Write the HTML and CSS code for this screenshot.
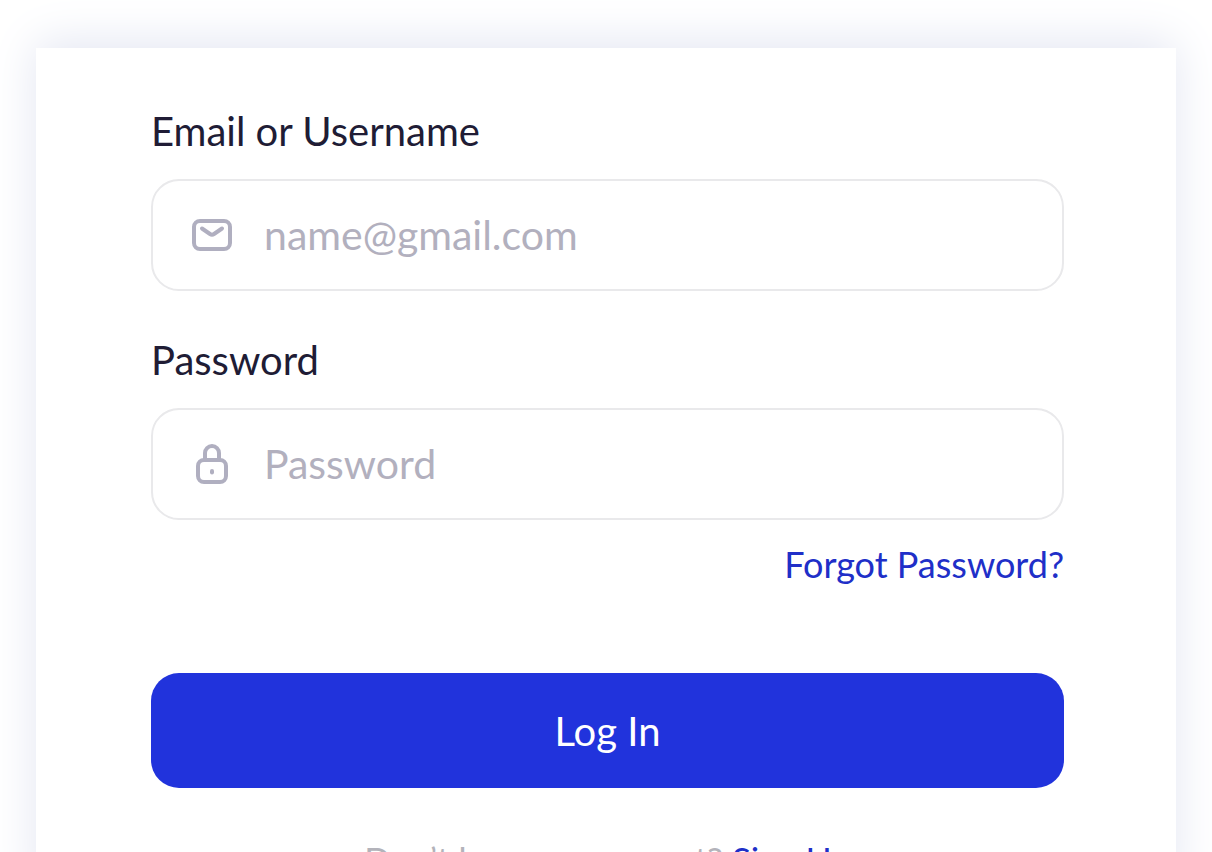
FILE: index.html
```html
<!DOCTYPE html>
<html lang="en">
<head>
	<meta charset="UTF-8">
	<meta name="viewport" content="width=device-width, initial-scale=1">
	<title>Log In</title>
	<link rel="stylesheet" href="styles.css">
</head>

<body>
	<main class="card">
		<form class="login-form">
			<div class="group">
				<label class="label" for="email">Email or Username</label>
				<div class="field">
					<svg class="icon" viewBox="0 0 48 48" aria-hidden="true">
						<rect x="6" y="10" width="36" height="28" rx="6"/>
						<path d="M14 17.500l8 5.500q2 1.400 4 0l8-5.500"/>
					</svg>
					<input class="input" id="email" type="text" placeholder="name@gmail.com">
				</div>
			</div>

			<div class="group">
				<label class="label" for="password">Password</label>
				<div class="field">
					<svg class="icon" viewBox="0 0 48 48" aria-hidden="true">
						<rect x="10" y="20" width="28" height="22" rx="6"/>
						<path d="M17 20v-7a7 7 0 0 1 14 0v7"/>
						<path d="M24 31v1.500"/>
					</svg>
					<input class="input" id="password" type="password" placeholder="Password">
				</div>
			</div>

			<a class="forgot" href="#">Forgot Password?</a>
			<button class="button" type="submit">Log In</button>
			<p class="signup">Don’t have an account? <a href="#">Sign Up</a></p>
		</form>
	</main>
</body>
</html>
```
FILE: styles.css
```css
* {
	box-sizing: border-box;
}
html {
	scrollbar-width: none;
}
body {
	margin: 0;
	padding: 48px 36px;
	background-color: #fff;
	color: #201c35;
	font-family: Lato, "Liberation Sans", sans-serif;
}
.card {
	padding: 59px 112px 16px 115px;
	background-color: #fff;
	box-shadow: 0 -6px 44px 0 #e3e6f2;
}
.login-form {
	display: flex;
	flex-direction: column;
}
.group {
	margin-bottom: 45px;
}
.group:nth-child(2) {
	margin-bottom: 24px;
}
.label {
	display: block;
	margin-bottom: 24px;
	font-size: 40px;
	line-height: 48px;
}
.field {
	display: flex;
	align-items: center;
	gap: 28px;
	height: 112px;
	padding: 0 35px;
	border: 2px solid #e9e9eb;
	border-radius: 28px;
}
.icon {
	flex: none;
	width: 48px;
	height: 48px;
	fill: none;
	stroke: #b0afc0;
	stroke-width: 4;
	stroke-linecap: round;
	stroke-linejoin: round;
}
.input {
	flex: 1;
	min-width: 0;
	padding: 0;
	border: none;
	outline: none;
	background: none;
	color: #201c35;
	font-family: inherit;
	font-size: 41px;
	line-height: 48px;
}
.input::placeholder {
	color: #b2b0be;
	opacity: 1;
}
.forgot {
	align-self: flex-end;
	margin-bottom: 89px;
	color: #202fc8;
	font-size: 36px;
	line-height: 40px;
	text-decoration: none;
}
.button {
	height: 115px;
	border: none;
	border-radius: 28px;
	background-color: #2133dc;
	color: #fff;
	font-family: inherit;
	font-size: 40px;
	cursor: pointer;
}
.signup {
	margin: 51px 0 0;
	color: #b3b3ba;
	font-size: 35px;
	line-height: 40px;
	text-align: center;
}
.signup a {
	color: #202fc8;
	text-decoration: none;
}
```
